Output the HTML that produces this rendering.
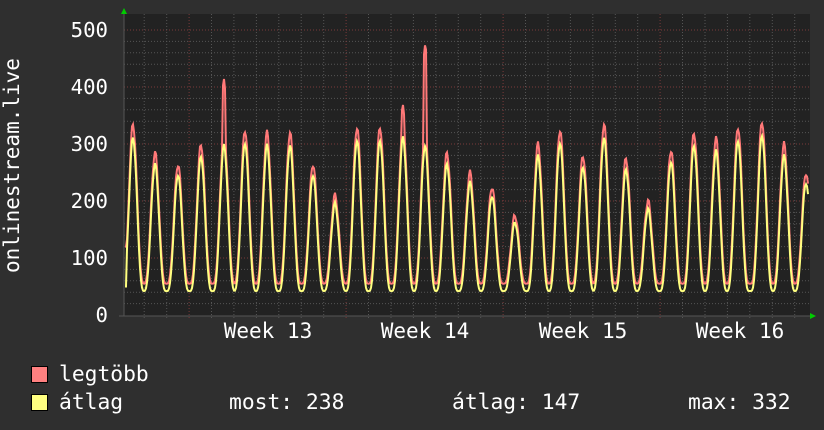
<!DOCTYPE html><html><head><meta charset="utf-8"><style>
html,body{margin:0;padding:0;background:#2f2f2f;width:824px;height:430px;overflow:hidden}
svg text{font-family:"DejaVu Sans Mono","Liberation Mono",monospace;fill:#fff}
</style></head><body>
<svg id="g" width="824" height="430" xmlns="http://www.w3.org/2000/svg">
<rect x="124" y="14" width="686" height="302" fill="#222"/>
<g id="grid"></g>
<path id="mx" fill="none" stroke="#ff7878" stroke-width="2"/>
<path id="av" fill="none" stroke="#ffff80" stroke-width="2"/>
<line x1="124" y1="10" x2="124" y2="316" stroke="#555" stroke-width="1"/>
<line x1="119" y1="316" x2="812" y2="316" stroke="#555" stroke-width="1"/>
<polygon points="121,14 127,14 124,8" fill="#0c0"/>
<polygon points="810,313 810,319 816,316" fill="#0c0"/>
<g font-size="20.7" text-anchor="end">
<text x="108" y="37">500</text><text x="108" y="94">400</text><text x="108" y="151">300</text>
<text x="108" y="208">200</text><text x="108" y="265">100</text><text x="108" y="322">0</text>
</g>
<text transform="translate(19,273) rotate(-90)" font-size="21">onlinestream.live</text>
<g font-size="21" text-anchor="middle">
<text x="268" y="338">Week 13</text><text x="425" y="338">Week 14</text>
<text x="583" y="338">Week 15</text><text x="740" y="338">Week 16</text>
</g>
<rect x="31.5" y="366.5" width="16" height="16" fill="#ff8080" stroke="#000"/>
<rect x="31.5" y="394.5" width="16" height="16" fill="#ffff80" stroke="#000"/>
<g font-size="21.3">
<text x="59" y="381">legtöbb</text><text x="59" y="409">átlag</text>
<text x="229" y="409">most: 238</text><text x="452" y="409">átlag: 147</text><text x="688" y="409">max: 332</text>
</g>
</svg>
<script>
var g=document.getElementById('grid'),s='';
function Y(v){return 315-v*0.57;}
for(var v=20;v<=500;v+=20){var y=Y(v).toFixed(1);var maj=v%100==0;
s+='<line x1="124" x2="810" y1="'+y+'" y2="'+y+'" stroke="'+(maj?'#7a3a3a':'#555')+'" stroke-dasharray="1,2"/>';}
for(var i=0;i<32;i++){var x=121.8+i*22.43;if(x<125||x>809)continue;var maj=(i%7==3);
s+='<line y1="14" y2="318" x1="'+x.toFixed(1)+'" x2="'+x.toFixed(1)+'" stroke="'+(maj?'#7a3a3a':'#555')+'" stroke-dasharray="1,2"/>';}
g.innerHTML=s;
var pk=[[133,335],[155,285],[178,265],[201,300],[224,320],[245,325],[267,320],[290,320],[313,265],[335,210],[357,330],[380,330],[403,335],[425,320],[447,285],[470,250],[492,225],[515,175],[538,300],[560,325],[583,280],[604,335],[626,275],[648,200],[671,290],[694,320],[716,310],[738,330],[762,340],[784,300],[806,250]];
var spikes={224:410,403:365,425:475};
function val(x,isMax){var best=pk[0],bd=1e9;for(var i=0;i<pk.length;i++){var dd=Math.abs(x-pk[i][0]);if(dd<bd){bd=dd;best=pk[i];}}
var d=(x-best[0])/22.4; var t=(1+Math.cos(2*Math.PI*d))/2;var f=Math.pow(t,1.6);
var base=isMax?55:42;var p=isMax?best[1]:best[1]*0.93;if(isMax&&spikes[best[0]]&&Math.abs(x-best[0])<1.5)p=spikes[best[0]];
return base+(p-base)*f+(isMax?5:3)*Math.sin(x*1.3)*f;}
function path(m){var d='';for(var x=125;x<=808;x+=1){var v=val(x,m);if(x<127)v=m?120:50;d+=(x==125?'M':'L')+x+','+Y(v).toFixed(1);}return d;}
document.getElementById('mx').setAttribute('d',path(true));
document.getElementById('av').setAttribute('d',path(false));
</script>
</body></html>
